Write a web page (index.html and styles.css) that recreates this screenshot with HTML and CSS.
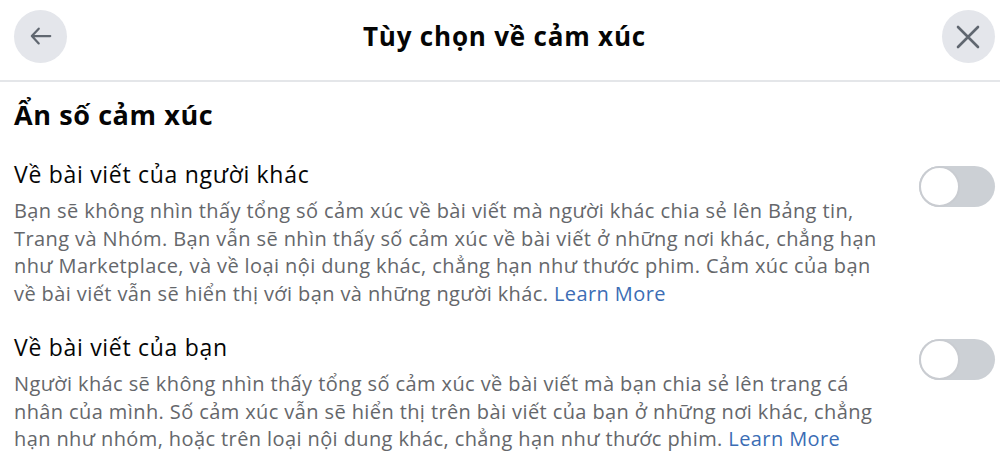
FILE: index.html
```html
<!DOCTYPE html>
<html lang="vi">
<head>
  <meta charset="UTF-8">
  <title>Tùy chọn về cảm xúc</title>
  <link rel="stylesheet" href="styles.css">
</head>
<body>

  <div class="hop-thoai">
    <!-- Thanh tiêu đề -->
    <div class="dau">
      <button class="nut-tron" aria-label="Quay lại">
        <svg width="24" height="24" viewBox="0 0 24 24"><path d="M22 12H2M9.5 4L2 12l7.5 8" transform="translate(1 0) scale(0.92)" fill="none" stroke="#606770" stroke-width="2.4" stroke-linecap="round" stroke-linejoin="round"/></svg>
      </button>
      <h1>Tùy chọn về cảm xúc</h1>
      <button class="nut-tron" aria-label="Đóng">
        <svg width="24" height="24" viewBox="0 0 24 24"><path d="M2 2l20 20M22 2L2 22" fill="none" stroke="#606770" stroke-width="2.6" stroke-linecap="round"/></svg>
      </button>
    </div>

    <div class="noi-dung">
      <h2>Ẩn số cảm xúc</h2>

      <div class="muc">
        <div class="chu">
          <h3>Về bài viết của người khác</h3>
          <p>Bạn sẽ không nhìn thấy tổng số cảm xúc về bài viết mà người khác chia sẻ lên Bảng tin, Trang và Nhóm. Bạn vẫn sẽ nhìn thấy số cảm xúc về bài viết ở những nơi khác, chẳng hạn như Marketplace, và về loại nội dung khác, chẳng hạn như thước phim. Cảm xúc của bạn về bài viết vẫn sẽ hiển thị với bạn và những người khác. <a href="#">Learn More</a></p>
        </div>
        <div class="cong-tac"><span class="num"></span></div>
      </div>

      <div class="muc">
        <div class="chu">
          <h3>Về bài viết của bạn</h3>
          <p>Người khác sẽ không nhìn thấy tổng số cảm xúc về bài viết mà bạn chia sẻ lên trang cá nhân của mình. Số cảm xúc vẫn sẽ hiển thị trên bài viết của bạn ở những nơi khác, chẳng hạn như nhóm, hoặc trên loại nội dung khác, chẳng hạn như thước phim. <a href="#">Learn More</a></p>
        </div>
        <div class="cong-tac"><span class="num"></span></div>
      </div>
    </div>
  </div>

</body>
</html>
```

FILE: styles.css
```css
* {
  box-sizing: border-box;
}

body {
  margin: 0;
  background: #fff;
  font-family: 'Open Sans', 'Noto Sans', sans-serif;
  color: #050505;
}

.dau {
  display: flex;
  align-items: flex-start;
  justify-content: space-between;
  height: 82px;
  padding: 10px 5px 0 14px;
  border-bottom: 2px solid #e4e6e9;
}

.dau h1 {
  margin: 0;
  font-size: 26px;
  line-height: 53px;
  font-weight: 700;
  letter-spacing: 0.8px;
}

.nut-tron {
  width: 53px;
  height: 53px;
  border-radius: 50%;
  border: none;
  background: #e4e6eb;
  display: flex;
  align-items: center;
  justify-content: center;
  padding: 0;
}

.noi-dung {
  padding: 13px 5px 0 14px;
}

h2 {
  margin: 0 0 22px;
  font-size: 27px;
  font-weight: 700;
  line-height: 40px;
  letter-spacing: 0.6px;
}

.muc {
  display: flex;
  align-items: flex-start;
  gap: 36px;
  margin-bottom: 22px;
}

.chu {
  flex: 1;
}

h3 {
  margin: 0 0 6px;
  font-size: 23px;
  font-weight: 400;
  line-height: 34px;
  letter-spacing: 0.7px;
}

p {
  margin: 0;
  font-size: 20px;
  line-height: 27.7px;
  letter-spacing: 0.4px;
  color: #65676b;
}

a {
  color: #3b6db5;
  text-decoration: none;
}

.cong-tac {
  width: 76px;
  height: 41px;
  margin-top: 9px;
  border-radius: 21px;
  background: #ccd0d5;
  flex-shrink: 0;
}

.num {
  display: block;
  width: 41px;
  height: 41px;
  border-radius: 50%;
  background: #fff;
  border: 2px solid #c9ccd1;
}
```
